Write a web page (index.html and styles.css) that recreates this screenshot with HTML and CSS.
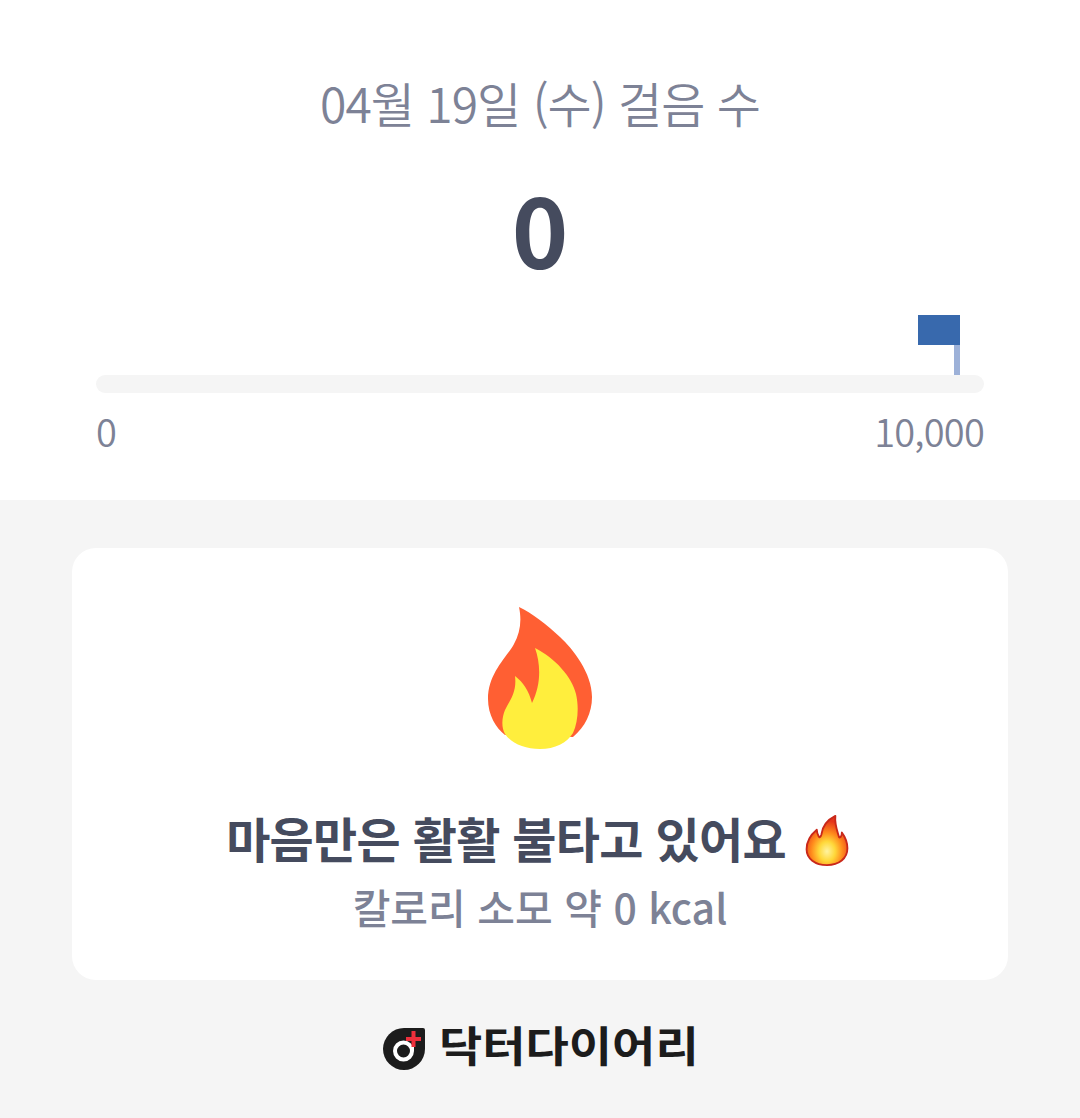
FILE: index.html
```html
<!DOCTYPE html>
<html lang="ko">
<head>
<meta charset="utf-8">
<title>걸음 수</title>
<link rel="stylesheet" href="styles.css">
</head>
<body>
<section class="steps">
  <h1 class="date">04월 19일 (수) 걸음 수</h1>
  <div class="count">0</div>
  <div class="goal">
    <div class="flag-row">
      <div class="flag">
        <div class="flag-cloth"></div>
        <div class="flag-pole"></div>
      </div>
    </div>
    <div class="track"></div>
    <div class="scale"><span>0</span><span>10,000</span></div>
  </div>
</section>
<main class="lower">
  <article class="card">
    <svg class="flame" viewBox="0 0 106 142" aria-hidden="true">
      <path fill="#ff5f33" d="M32 0C35 14 33 26 27 37C20 50 1 66 1 92C1 108 9 121 18 128L86 130C98 120 105 106 105 90C105 66 86 42 73 30C60 18 45 6 32 0Z"/>
      <path fill="#ffee3d" d="M48 41C54 58 54 78 45 96C42 84 36 75 28 69C30 85 23 93 18 103C15 110 14 120 18 127C25 137 38 142 53 142C68 142 80 136 86 126C91 115 92 100 89 87C85 70 68 51 48 41Z"/>
    </svg>
    <h2 class="headline">마음만은 활활 불타고 있어요
      <svg class="mini-flame" viewBox="0 0 46 56" aria-hidden="true">
        <defs>
          <radialGradient id="fire" cx="50%" cy="72%" r="62%">
            <stop offset="0" stop-color="#fff3a0"/>
            <stop offset=".32" stop-color="#ffd83a"/>
            <stop offset=".62" stop-color="#ff8a1c"/>
            <stop offset="1" stop-color="#e5341b"/>
          </radialGradient>
        </defs>
        <path fill="url(#fire)" stroke="#c9281a" stroke-width="2" stroke-linejoin="round" d="M32 2C24 6 18 13 17 22C16 25 15 26 14 24C13 22 12 20 12 17C6 22 1 30 1 38C1 48 10 55 23 55C36 55 45 48 45 37C45 30 42 24 39 20C39 24 37 26 36 25C34 18 31 11 32 2Z"/>
      </svg>
    </h2>
    <p class="calories">칼로리 소모 약 <b>0 kcal</b></p>
  </article>
  <footer class="brand">
    <svg class="brand-mark" viewBox="0 0 42 42" aria-hidden="true">
      <path fill="#1c1c1c" d="M21 0H40Q42 0 42 2V21A21 21 0 1 1 21 0Z"/>
      <circle cx="20.5" cy="23" r="8.5" fill="none" stroke="#fff" stroke-width="4"/>
      <path fill="#fff" d="M27 17h4v6h-4z"/>
      <path fill="#ee2f3c" d="M28.500 3h4v6h5.500v4h-5.500v6h-4v-6h-5.500v-4h5.500z"/>
    </svg>
    <span class="brand-name">닥터다이어리</span>
  </footer>
</main>
</body>
</html>
```

FILE: styles.css
```css
* { box-sizing: border-box; }
html, body { margin: 0; padding: 0; }
body {
  width: 1080px;
  height: 1118px;
  overflow: hidden;
  background: #f5f5f5;
  font-family: "Noto Sans CJK KR", "Noto Sans", sans-serif;
}
.steps {
  height: 500px;
  background: #fff;
  padding: 68px 96px 0;
  display: flex;
  flex-direction: column;
  align-items: stretch;
}
.date {
  margin: 0;
  height: 68px;
  line-height: 68px;
  font-size: 48px;
  font-weight: 350;
  letter-spacing: -1px;
  color: #7d8296;
  text-align: center;
}
.count {
  margin-top: 42px;
  height: 100px;
  line-height: 100px;
  font-size: 96px;
  font-weight: 700;
  color: #454b5e;
  text-align: center;
}
.goal { margin-top: 37px; }
.flag-row { display: flex; justify-content: flex-end; padding-right: 24px; }
.flag { width: 42px; height: 60px; display: flex; flex-direction: column; align-items: flex-end; }
.flag-cloth { width: 42px; height: 30px; background: #3869ad; }
.flag-pole { width: 6px; height: 30px; background: #9db1d8; }
.track { height: 18px; border-radius: 9px; background: #f5f5f5; }
.scale {
  margin-top: 13px;
  display: flex;
  justify-content: space-between;
  font-size: 38px;
  line-height: 50px;
  font-weight: 350;
  letter-spacing: -0.8px;
  color: #7d8296;
}
.lower { padding: 48px 72px 0; }
.card {
  height: 432px;
  background: #fff;
  border-radius: 24px;
  padding-top: 59px;
  display: flex;
  flex-direction: column;
  align-items: center;
}
.flame { width: 106px; height: 142px; flex: none; }
.headline {
  margin: 52px 0 0;
  height: 72px;
  display: flex;
  align-items: center;
  gap: 19px;
  font-size: 48px;
  line-height: 72px;
  font-weight: 700;
  letter-spacing: -0.7px;
  color: #454b5e;
}
.mini-flame { width: 44px; height: 52px; flex: none; margin: 5px 5px 0 0; }
.calories {
  margin: 1px 0 0;
  font-size: 41px;
  line-height: 64px;
  font-weight: 500;
  color: #7d8296;
}
.calories b { font-weight: 500; }
.brand {
  margin-top: 48px;
  display: flex;
  justify-content: center;
  align-items: flex-start;
  gap: 14px;
}
.brand-mark { width: 42px; height: 42px; flex: none; }
.brand-name {
  margin: -11px 27px 0 0;
  font-size: 42px;
  line-height: 54px;
  font-weight: 700;
  letter-spacing: 0;
  color: #1c1c1c;
  transform: scaleX(1.12);
  transform-origin: left center;
}
```
